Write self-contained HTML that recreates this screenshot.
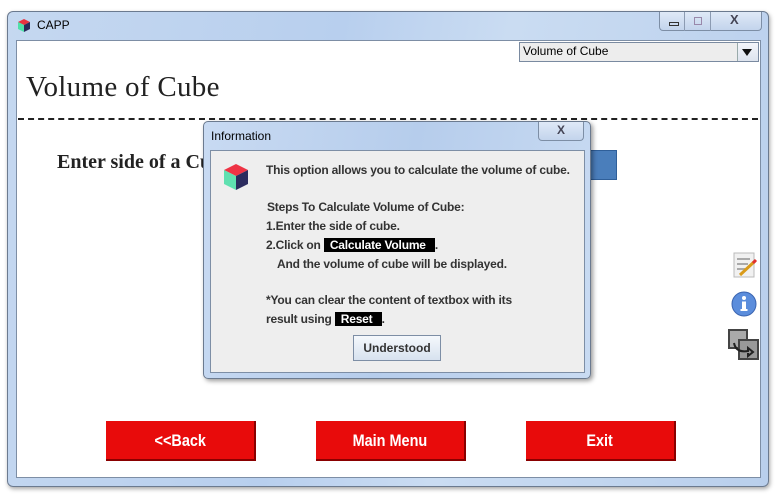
<!DOCTYPE html>
<html><head><meta charset="utf-8"><style>
*{margin:0;padding:0;box-sizing:border-box}
body{width:784px;height:500px;background:#fff;position:relative;overflow:hidden;font-family:"Liberation Sans",sans-serif}
.abs{position:absolute}
.win{left:7px;top:11px;width:762px;height:476px;border:1px solid #6b7a8f;border-radius:6px;background:linear-gradient(100deg,#c5d8f0 0%,#b8cfee 40%,#cadcf2 60%,#b9cfec 100%);box-shadow:1px 2px 4px rgba(0,0,0,.35)}
.content{left:16px;top:40px;width:745px;height:438px;background:#fff;border:1px solid #7d8ea5}
.btn{width:150px;height:40px;background:#e80b0b;border-right:2px solid #8a0000;border-bottom:2px solid #8a0000;color:#fff;font-weight:bold;font-size:17px;text-align:center;line-height:39px}
.btn span{display:inline-block;transform:scaleX(0.85)}
.dlg{left:203px;top:121px;width:388px;height:258px;border:1px solid #6b7a8f;border-radius:5px;background:linear-gradient(100deg,#c8daf2,#b6cdec 50%,#c9dbf2);box-shadow:2px 2px 5px rgba(0,0,0,.4)}
.panel{left:6px;top:28px;width:375px;height:223px;background:#eeeeee;border:1px solid #7d8ea5}
.t{font-size:12px;font-weight:bold;color:#333;white-space:nowrap;letter-spacing:-0.2px}
.hl{background:#000;color:#fff;padding:0 6px 0 6px}
</style></head><body>
<div class="abs win">
  <div class="abs" style="left:10px;top:7px;width:12px;height:13px">
    <svg width="12" height="13"><polygon points="6,0 12,3 6,6 0,3" fill="#e8323f"/><polygon points="0,3 6,6 6,13 0,10" fill="#4fe0a8"/><polygon points="6,6 12,3 12,10 6,13" fill="#2a2a5a"/></svg>
  </div>
  <div class="abs" style="left:29px;top:6px;font-size:12px;color:#000">CAPP</div>
  <div class="abs" style="left:651px;top:0;width:103px;height:19px;border:1px solid #7d8ea5;border-top:none;border-radius:0 0 4px 4px;background:linear-gradient(#dfe9f7,#c3d4ec)"></div>
  <div class="abs" style="left:676px;top:0;width:1px;height:19px;background:#8c9bb2"></div>
  <div class="abs" style="left:702px;top:0;width:1px;height:19px;background:#8c9bb2"></div>
  <div class="abs" style="left:661px;top:10px;width:10px;height:4px;border:1px solid #333"></div>
  <div class="abs" style="left:686px;top:5px;width:8px;height:8px;border:1px solid #98a"></div>
  <div class="abs" style="left:722px;top:0px;font-size:13px;font-weight:bold;color:#445">X</div>
</div>
<div class="abs content">
  <div class="abs" style="left:502px;top:1px;width:240px;height:20px;background:#ededed;border:1px solid #7a8aa0"></div>
  <div class="abs" style="left:506px;top:3px;font-size:12px;color:#000">Volume of Cube</div>
  <div class="abs" style="left:720px;top:2px;width:21px;height:18px;border-left:1px solid #9aa;background:linear-gradient(#f4f6fa,#dde4ee)"></div>
  <div class="abs" style="left:725px;top:8px;width:0;height:0;border-left:5px solid transparent;border-right:5px solid transparent;border-top:7px solid #111"></div>
  <div class="abs" style="left:9px;top:30px;font-family:'Liberation Serif',serif;font-size:29px;color:#222;letter-spacing:0.3px">Volume of Cube</div>
  <div class="abs" style="left:1px;top:77px;width:740px;border-top:2px dashed #222"></div>
  <div class="abs" style="left:40px;top:110px;font-family:'Liberation Serif',serif;font-weight:bold;font-size:20px;color:#222">Enter side of a Cube</div>
  <div class="abs" style="left:560px;top:109px;width:40px;height:30px;background:#4a7ebb;border:1px solid #2f5f99"></div>
  <svg class="abs" style="left:714px;top:210px" width="28" height="28"><rect x="3" y="2" width="20" height="24" fill="#f1f1f1" stroke="#bbb"/><line x1="6" y1="8" x2="19" y2="8" stroke="#aaa" stroke-width="2"/><line x1="6" y1="13" x2="17" y2="13" stroke="#aaa" stroke-width="2"/><line x1="6" y1="18" x2="14" y2="18" stroke="#aaa" stroke-width="2"/><line x1="9" y1="24" x2="24" y2="10" stroke="#d99b1a" stroke-width="3"/><line x1="22" y1="12" x2="25" y2="9" stroke="#e03030" stroke-width="3"/></svg>
  <svg class="abs" style="left:714px;top:250px" width="26" height="26"><circle cx="13" cy="13" r="12" fill="#5b8ddc" stroke="#3a64b0"/><circle cx="13" cy="7" r="2" fill="#fff"/><rect x="11" y="10.5" width="4" height="9" fill="#fff"/><rect x="9.5" y="18" width="7" height="2" fill="#fff"/></svg>
  <svg class="abs" style="left:711px;top:288px" width="32" height="32"><rect x="1" y="1" width="18" height="18" fill="#aaa" stroke="#444" stroke-width="2"/><rect x="11" y="11" width="19" height="19" fill="#999" stroke="#444" stroke-width="2"/><path d="M6 14 Q8 24 20 22 L20 19 L25 23 L20 27 L20 24" fill="none" stroke="#222" stroke-width="2"/></svg>
</div>
<div class="abs btn" style="left:106px;top:421px"><span>&lt;&lt;Back</span></div>
<div class="abs btn" style="left:316px;top:421px"><span>Main Menu</span></div>
<div class="abs btn" style="left:526px;top:421px"><span>Exit</span></div>

<div class="abs dlg">
  <div class="abs" style="left:7px;top:7px;font-size:12px;color:#000">Information</div>
  <div class="abs" style="left:334px;top:0;width:46px;height:19px;border:1px solid #7d8ea5;border-top:none;border-radius:0 0 4px 4px;background:linear-gradient(#dfe9f7,#c3d4ec);text-align:center;font-size:12px;font-weight:bold;color:#445;line-height:17px">X</div>
  <div class="abs panel">
    <svg class="abs" style="left:13px;top:13px" width="24" height="26"><polygon points="12,0 24,6 12,12 0,6" fill="#ee3344"/><polygon points="0,6 12,12 12,26 0,20" fill="#5fe0b0"/><polygon points="12,12 24,6 24,20 12,26" fill="#2b2b5e"/></svg>
    <div class="abs t" style="left:55px;top:12px">This option allows you to calculate the volume of cube.</div>
    <div class="abs t" style="left:56px;top:49px">Steps To Calculate Volume of Cube:</div>
    <div class="abs t" style="left:55px;top:68px">1.Enter the side of cube.</div>
    <div class="abs t" style="left:55px;top:87px">2.Click on <span class="hl">Calculate Volume </span> .</div>
    <div class="abs t" style="left:66px;top:106px">And the volume of cube will be displayed.</div>
    <div class="abs t" style="left:55px;top:142px">*You can clear the content of textbox with its</div>
    <div class="abs t" style="left:55px;top:161px">result using <span class="hl">Reset </span> .</div>
    <div class="abs" style="left:142px;top:184px;width:88px;height:26px;border:1px solid #7d8ea5;background:linear-gradient(#f5f8fc,#d7e2ef);font-size:12px;font-weight:bold;color:#333;text-align:center;line-height:24px">Understood</div>
  </div>
</div>
</body></html>
